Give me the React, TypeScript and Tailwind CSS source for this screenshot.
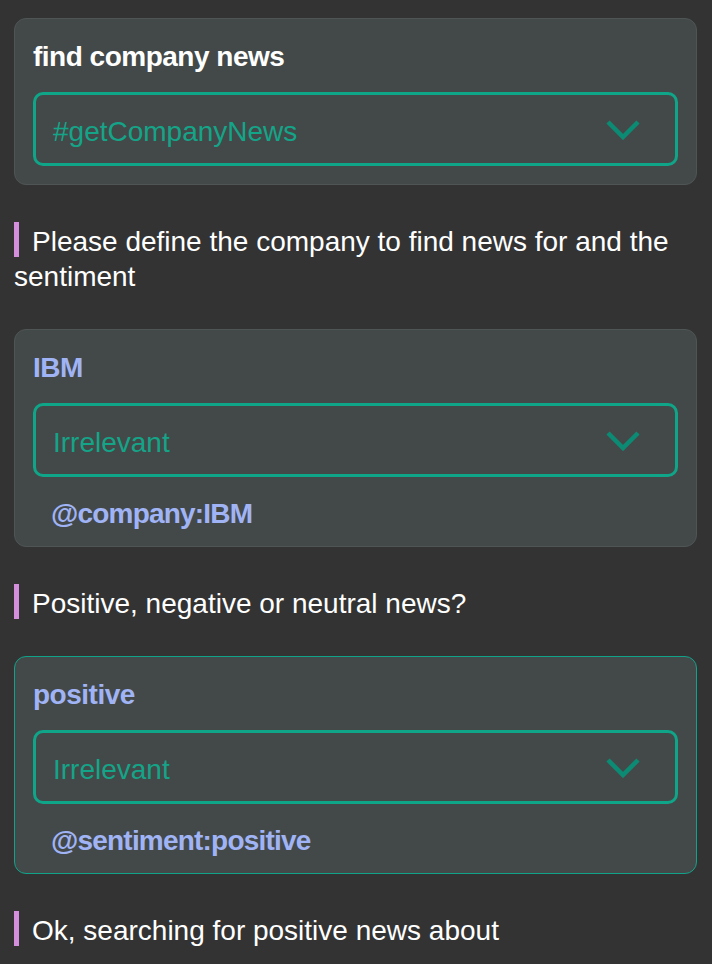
import React from "react";

const Chevron = () => (
  <svg width="34" height="21" viewBox="0 0 34 21" className="shrink-0" aria-hidden="true">
    <polyline
      points="2,3 17,18 32,3"
      fill="none"
      stroke="#0c8b74"
      strokeWidth="4.5"
      strokeLinecap="butt"
      strokeLinejoin="miter"
    />
  </svg>
);

const Select = ({ value }: { value: string }) => (
  <div className="mt-[19px] h-[74px] rounded-[10px] border-[3px] border-[#0fa589] flex items-center justify-between pl-[17px] pr-[35px]">
    <span className="pt-[6px] text-[28px] leading-[32px] text-[#14a488]">{value}</span>
    <Chevron />
  </div>
);

const Card = ({
  title,
  titleColor,
  value,
  tag,
  active,
}: {
  title: string;
  titleColor: string;
  value: string;
  tag?: string;
  active?: boolean;
}) => (
  <div
    className={
      "rounded-[12px] border bg-[#434948] px-[18px] pt-[22px] " +
      (tag ? "pb-[16px] " : "pb-[18px] ") +
      (active ? "border-[#10a38a]" : "border-[#4f5555]")
    }
  >
    <div
      className="text-[28px] leading-[32px] font-bold tracking-[-0.5px]"
      style={{ color: titleColor }}
    >
      {title}
    </div>
    <Select value={value} />
    {tag && (
      <div className="mt-[21px] pl-[18px] text-[28px] leading-[32px] font-bold tracking-[-0.8px] text-[#a0b4f5]">
        {tag}
      </div>
    )}
  </div>
);

const Message = ({ text }: { text: string }) => (
  <p className="text-[28px] leading-[35px] text-white mt-[37px] mb-[35px]">
    <span className="inline-block w-[5px] h-[35px] bg-[#d48fdc] align-text-bottom mr-[13px]" />
    {text}
  </p>
);

export default function App() {
  return (
    <div
      className="min-h-screen bg-[#333333] pt-[18px] pl-[14px] pr-[15px] overflow-hidden"
      style={{ fontFamily: '"Liberation Sans", Arial, sans-serif' }}
    >
      <Card title="find company news" titleColor="#ffffff" value="#getCompanyNews" />
      <Message text="Please define the company to find news for and the sentiment" />
      <Card title="IBM" titleColor="#a0b4f5" value="Irrelevant" tag="@company:IBM" />
      <Message text="Positive, negative or neutral news?" />
      <Card
        title="positive"
        titleColor="#a0b4f5"
        value="Irrelevant"
        tag="@sentiment:positive"
        active
      />
      <Message text="Ok, searching for positive news about" />
    </div>
  );
}
